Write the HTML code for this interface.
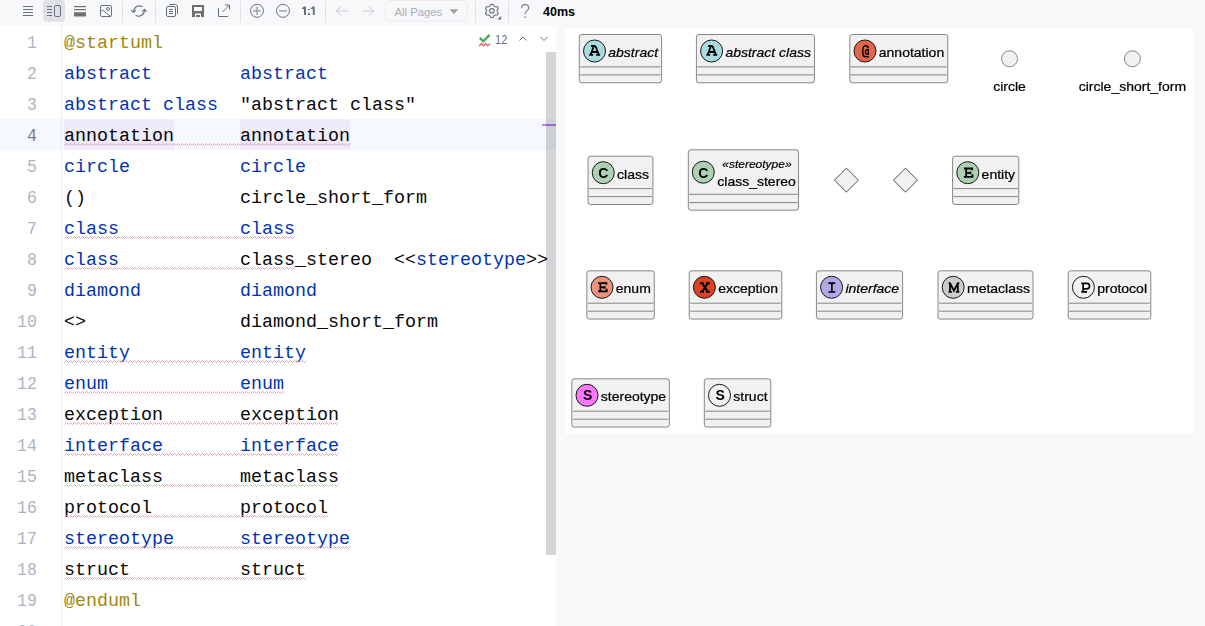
<!DOCTYPE html>
<html><head><meta charset="utf-8">
<style>
html,body{margin:0;padding:0;}
body{width:1205px;height:626px;overflow:hidden;background:#f7f8fa;position:relative;font-family:"Liberation Sans",sans-serif;}
.abs{position:absolute;}
#editor{position:absolute;left:0;top:26px;width:556px;height:600px;background:#fff;overflow:hidden;}
.ln{position:absolute;left:0;width:37px;text-align:right;transform:scaleX(0.9);transform-origin:36px 0;font-family:"Liberation Mono",monospace;font-size:18.33px;line-height:31px;height:31px;color:#aeb3c2;white-space:pre;}
.cl{position:absolute;left:64px;font-family:"Liberation Mono",monospace;font-size:18.33px;line-height:31px;height:31px;color:#080808;white-space:pre;}
.k{color:#0033b3;}
.m{color:#9e880d;}
.hl{}
</style></head><body>
<svg class="abs" style="left:0;top:0" width="600" height="26" viewBox="0 0 600 26">
<g stroke="#6c707e" stroke-width="1" fill="none">
<path d="M23 6.5H33M23 9.5H33M23 12.5H33M23 15.5H33"/>
</g>
<rect x="43" y="0" width="22" height="22" rx="4" fill="#dfe1e5"/>
<g stroke="#6c707e" stroke-width="1" fill="none">
<path d="M47 6.5H52M47 9.5H52M47 12.5H52M47 15.5H52"/>
<rect x="54.5" y="5.5" width="6" height="11" rx="1.5"/>
</g>
<g fill="#6e6e6e">
<rect x="74" y="6" width="12" height="1.2"/>
<rect x="74" y="9" width="12" height="1.2"/>
<rect x="74" y="12.3" width="12" height="4.2"/>
</g>
<g stroke="#6c707e" stroke-width="1" fill="none">
<rect x="100.5" y="5.5" width="11" height="11" rx="1.5"/>
<circle cx="108" cy="9" r="1.5"/>
<path d="M100.7 11.6L102.7 10.1L110.6 16.4" stroke-linejoin="round"/>
</g>
<g stroke="#dfe1e5" stroke-width="1">
<path d="M122.5 1V22.5M155.5 1V22.5M240.5 1V22.5M325.5 1V22.5M475.5 1V22.5M508.5 1V22.5"/>
</g>
<g stroke="#6c707e" stroke-width="1.1" fill="none" stroke-linecap="round" stroke-linejoin="round">
<path d="M133.5 12A6 6 0 0 1 142.3 6.6"/>
<path d="M131.5 10.3L133.5 12.5L135.5 10.3"/>
<path d="M136 15.6A6 6 0 0 0 144.5 9.5"/>
<path d="M142.5 11.5L144.5 9.3L146.5 11.5"/>
</g>
<g stroke="#6c707e" stroke-width="1" fill="none">
<rect x="166.5" y="6.5" width="9" height="10" rx="1.5"/>
<path d="M169.3 4.5H175A2.5 2.5 0 0 1 177.5 7V14"/>
<path d="M169 9.5H173M169 11.5H173M169 13.5H173"/>
</g>
<path fill="#6e6e6e" fill-rule="evenodd" d="M192 5H204V17H192ZM194 7V11H202V7ZM195 13.5V17H196V15H200V17H201V13.5Z"/>
<g stroke="#6c707e" stroke-width="1" fill="none">
<path d="M218.5 8V16.5H228"/>
<path d="M222.5 12L229.5 5M225 5H229.5V9.5"/>
</g>
<g stroke="#6c707e" stroke-width="1" fill="none">
<circle cx="257" cy="10.8" r="6.5"/>
<circle cx="283" cy="10.8" r="6.5"/>
</g>
<g stroke="#8c91a0" stroke-width="1.3" fill="none">
<path d="M253 10.8H261M257 6.8V14.8M279 10.8H287"/>
</g>
<path fill="#6c707e" d="M304 6.6H306V14.9H304ZM302 7.9L304 6.6V9L302 9ZM308 8.9H310V10H308ZM308 13.2H310V14.9H308ZM312.8 6.6H314.7V14.9H312.8ZM311 7.9L312.8 6.6V9L311 9Z"/>
<g stroke="#c9ccd6" stroke-width="1" fill="none">
<path d="M336.5 11H348M341 6.5L336.5 11L341 15.5"/>
<path d="M362 11H373.5M369 6.5L373.5 11L369 15.5"/>
</g>
<rect x="385.5" y="0.5" width="82" height="20.5" rx="4" fill="none" stroke="#ebecf0"/>
<text x="394.5" y="16.2" font-family="Liberation Sans" font-size="11.3" fill="#a8adbd">All Pages</text>
<path d="M449.5 9.3H458.3L453.9 13.9Z" fill="#a0a0a0"/>
<path d="M497.15 10.85L497.17 11.12L497.22 11.39L497.31 11.67L497.45 11.98L497.78 12.36L498.08 12.78L498.14 13.15L498.13 13.52L498.04 13.86L497.89 14.17L497.68 14.46L497.41 14.70L497.10 14.90L496.73 15.03L496.20 14.99L495.70 14.90L495.35 14.94L495.05 15.01L494.77 15.11L494.53 15.22L494.30 15.37L494.08 15.55L493.86 15.77L493.65 16.04L493.47 16.50L493.25 16.96L492.95 17.20L492.61 17.37L492.26 17.47L491.90 17.50L491.54 17.47L491.19 17.37L490.85 17.20L490.55 16.96L490.33 16.50L490.15 16.04L489.94 15.77L489.72 15.55L489.50 15.37L489.27 15.22L489.03 15.11L488.75 15.01L488.45 14.94L488.10 14.90L487.60 14.99L487.07 15.03L486.70 14.90L486.39 14.70L486.12 14.46L485.91 14.17L485.76 13.86L485.67 13.52L485.66 13.15L485.72 12.78L486.02 12.36L486.35 11.98L486.49 11.67L486.58 11.39L486.63 11.12L486.65 10.85L486.63 10.58L486.58 10.31L486.49 10.03L486.35 9.72L486.02 9.34L485.72 8.92L485.66 8.55L485.67 8.18L485.76 7.84L485.91 7.52L486.12 7.24L486.39 7.00L486.70 6.80L487.07 6.67L487.60 6.71L488.10 6.80L488.45 6.76L488.75 6.69L489.03 6.59L489.27 6.48L489.50 6.33L489.72 6.15L489.94 5.93L490.15 5.66L490.33 5.20L490.55 4.74L490.85 4.50L491.19 4.33L491.54 4.23L491.90 4.20L492.26 4.23L492.61 4.33L492.95 4.50L493.25 4.74L493.47 5.20L493.65 5.66L493.86 5.93L494.08 6.15L494.30 6.33L494.53 6.48L494.77 6.59L495.05 6.69L495.35 6.76L495.70 6.80L496.20 6.71L496.73 6.67L497.10 6.80L497.41 7.00L497.68 7.24L497.89 7.52L498.04 7.84L498.13 8.18L498.14 8.55L498.08 8.92L497.78 9.34L497.45 9.72L497.31 10.03L497.22 10.31L497.17 10.58L497.15 10.85Z" stroke="#6c707e" stroke-width="1.15" fill="none" stroke-linejoin="round"/>
<circle cx="491.9" cy="10.85" r="2.3" stroke="#6c707e" stroke-width="1.15" fill="none"/>
<path d="M501.2 16.1V19.6H497.2Z" fill="#6c707e"/>
<path d="M521.6 8.2C521.6 5.8 523.2 4.6 525.2 4.6C527.3 4.6 528.7 5.9 528.7 7.8C528.7 9.7 527.4 10.5 526.3 11.4C525.4 12.2 525.2 12.9 525.2 14.3" stroke="#7b7f8e" stroke-width="1.1" fill="none"/><circle cx="525.2" cy="17.1" r="0.85" fill="#7b7f8e"/>
<text x="543" y="16" font-family="Liberation Sans" font-weight="bold" font-size="12.5" fill="#000">40ms</text>
</svg>
<div id="editor">
<div class="abs" style="left:0;top:93px;width:556px;height:31px;background:#f5f8fe"></div>
<div class="abs" style="left:61px;top:0;width:1px;height:600px;background:#ebecf0"></div>
<div class="abs" style="left:64px;top:93px;width:110px;height:31px;background:#edebfc"></div>
<div class="abs" style="left:240px;top:93px;width:110px;height:31px;background:#edebfc"></div>
<div class="ln" style="top:1.6px">1</div>
<div class="ln" style="top:32.6px">2</div>
<div class="ln" style="top:63.6px">3</div>
<div class="ln" style="top:94.6px;color:#767a8a">4</div>
<div class="ln" style="top:125.6px">5</div>
<div class="ln" style="top:156.6px">6</div>
<div class="ln" style="top:187.6px">7</div>
<div class="ln" style="top:218.6px">8</div>
<div class="ln" style="top:249.6px">9</div>
<div class="ln" style="top:280.6px">10</div>
<div class="ln" style="top:311.6px">11</div>
<div class="ln" style="top:342.6px">12</div>
<div class="ln" style="top:373.6px">13</div>
<div class="ln" style="top:404.6px">14</div>
<div class="ln" style="top:435.6px">15</div>
<div class="ln" style="top:466.6px">16</div>
<div class="ln" style="top:497.6px">17</div>
<div class="ln" style="top:528.6px">18</div>
<div class="ln" style="top:559.6px">19</div>
<div class="ln" style="top:590.6px">20</div>
<div class="cl" style="top:1.6px"><span class="m">@startuml</span></div>
<div class="cl" style="top:32.6px"><span class="k">abstract</span>        <span class="k">abstract</span></div>
<div class="cl" style="top:63.6px"><span class="k">abstract class</span>  "abstract class"</div>
<div class="cl" style="top:94.6px"><span class="hl">annotation</span>      <span class="hl">annotation</span></div>
<div class="cl" style="top:125.6px"><span class="k">circle</span>          <span class="k">circle</span></div>
<div class="cl" style="top:156.6px">()              circle_short_form</div>
<div class="cl" style="top:187.6px"><span class="k">class</span>           <span class="k">class</span></div>
<div class="cl" style="top:218.6px"><span class="k">class</span>           class_stereo  &lt;&lt;<span class="k">stereotype</span>&gt;&gt;</div>
<div class="cl" style="top:249.6px"><span class="k">diamond</span>         <span class="k">diamond</span></div>
<div class="cl" style="top:280.6px">&lt;&gt;              diamond_short_form</div>
<div class="cl" style="top:311.6px"><span class="k">entity</span>          <span class="k">entity</span></div>
<div class="cl" style="top:342.6px"><span class="k">enum</span>            <span class="k">enum</span></div>
<div class="cl" style="top:373.6px">exception       exception</div>
<div class="cl" style="top:404.6px"><span class="k">interface</span>       <span class="k">interface</span></div>
<div class="cl" style="top:435.6px">metaclass       metaclass</div>
<div class="cl" style="top:466.6px">protocol        protocol</div>
<div class="cl" style="top:497.6px"><span class="k">stereotype</span>      <span class="k">stereotype</span></div>
<div class="cl" style="top:528.6px">struct          struct</div>
<div class="cl" style="top:559.6px"><span class="m">@enduml</span></div>
<svg class="abs" style="left:0;top:0" width="556" height="600">
<polyline points="64.5,119.5 66.5,117.5 68.5,119.5 70.5,117.5 72.5,119.5 74.5,117.5 76.5,119.5 78.5,117.5 80.5,119.5 82.5,117.5 84.5,119.5 86.5,117.5 88.5,119.5 90.5,117.5 92.5,119.5 94.5,117.5 96.5,119.5 98.5,117.5 100.5,119.5 102.5,117.5 104.5,119.5 106.5,117.5 108.5,119.5 110.5,117.5 112.5,119.5 114.5,117.5 116.5,119.5 118.5,117.5 120.5,119.5 122.5,117.5 124.5,119.5 126.5,117.5 128.5,119.5 130.5,117.5 132.5,119.5 134.5,117.5 136.5,119.5 138.5,117.5 140.5,119.5 142.5,117.5 144.5,119.5 146.5,117.5 148.5,119.5 150.5,117.5 152.5,119.5 154.5,117.5 156.5,119.5 158.5,117.5 160.5,119.5 162.5,117.5 164.5,119.5 166.5,117.5 168.5,119.5 170.5,117.5 172.5,119.5 174.5,117.5 176.5,119.5 178.5,117.5 180.5,119.5 182.5,117.5 184.5,119.5 186.5,117.5 188.5,119.5 190.5,117.5 192.5,119.5 194.5,117.5 196.5,119.5 198.5,117.5 200.5,119.5 202.5,117.5 204.5,119.5 206.5,117.5 208.5,119.5 210.5,117.5 212.5,119.5 214.5,117.5 216.5,119.5 218.5,117.5 220.5,119.5 222.5,117.5 224.5,119.5 226.5,117.5 228.5,119.5 230.5,117.5 232.5,119.5 234.5,117.5 236.5,119.5 238.5,117.5 240.5,119.5 242.5,117.5 244.5,119.5 246.5,117.5 248.5,119.5 250.5,117.5 252.5,119.5 254.5,117.5 256.5,119.5 258.5,117.5 260.5,119.5 262.5,117.5 264.5,119.5 266.5,117.5 268.5,119.5 270.5,117.5 272.5,119.5 274.5,117.5 276.5,119.5 278.5,117.5 280.5,119.5 282.5,117.5 284.5,119.5 286.5,117.5 288.5,119.5 290.5,117.5 292.5,119.5 294.5,117.5 296.5,119.5 298.5,117.5 300.5,119.5 302.5,117.5 304.5,119.5 306.5,117.5 308.5,119.5 310.5,117.5 312.5,119.5 314.5,117.5 316.5,119.5 318.5,117.5 320.5,119.5 322.5,117.5 324.5,119.5 326.5,117.5 328.5,119.5 330.5,117.5 332.5,119.5 334.5,117.5 336.5,119.5 338.5,117.5 340.5,119.5 342.5,117.5 344.5,119.5 346.5,117.5 348.5,119.5 350.5,117.5" fill="none" stroke="#ee9ea8" stroke-width="1"/>
<polyline points="64.5,212.5 66.5,210.5 68.5,212.5 70.5,210.5 72.5,212.5 74.5,210.5 76.5,212.5 78.5,210.5 80.5,212.5 82.5,210.5 84.5,212.5 86.5,210.5 88.5,212.5 90.5,210.5 92.5,212.5 94.5,210.5 96.5,212.5 98.5,210.5 100.5,212.5 102.5,210.5 104.5,212.5 106.5,210.5 108.5,212.5 110.5,210.5 112.5,212.5 114.5,210.5 116.5,212.5 118.5,210.5 120.5,212.5 122.5,210.5 124.5,212.5 126.5,210.5 128.5,212.5 130.5,210.5 132.5,212.5 134.5,210.5 136.5,212.5 138.5,210.5 140.5,212.5 142.5,210.5 144.5,212.5 146.5,210.5 148.5,212.5 150.5,210.5 152.5,212.5 154.5,210.5 156.5,212.5 158.5,210.5 160.5,212.5 162.5,210.5 164.5,212.5 166.5,210.5 168.5,212.5 170.5,210.5 172.5,212.5 174.5,210.5 176.5,212.5 178.5,210.5 180.5,212.5 182.5,210.5 184.5,212.5 186.5,210.5 188.5,212.5 190.5,210.5 192.5,212.5 194.5,210.5 196.5,212.5 198.5,210.5 200.5,212.5 202.5,210.5 204.5,212.5 206.5,210.5 208.5,212.5 210.5,210.5 212.5,212.5 214.5,210.5 216.5,212.5 218.5,210.5 220.5,212.5 222.5,210.5 224.5,212.5 226.5,210.5 228.5,212.5 230.5,210.5 232.5,212.5 234.5,210.5 236.5,212.5 238.5,210.5 240.5,212.5 242.5,210.5 244.5,212.5 246.5,210.5 248.5,212.5 250.5,210.5 252.5,212.5 254.5,210.5 256.5,212.5 258.5,210.5 260.5,212.5 262.5,210.5 264.5,212.5 266.5,210.5 268.5,212.5 270.5,210.5 272.5,212.5 274.5,210.5 276.5,212.5 278.5,210.5 280.5,212.5 282.5,210.5 284.5,212.5 286.5,210.5 288.5,212.5 290.5,210.5 292.5,212.5 294.5,210.5" fill="none" stroke="#ee9ea8" stroke-width="1"/>
<polyline points="64.5,243.5 66.5,241.5 68.5,243.5 70.5,241.5 72.5,243.5 74.5,241.5 76.5,243.5 78.5,241.5 80.5,243.5 82.5,241.5 84.5,243.5 86.5,241.5 88.5,243.5 90.5,241.5 92.5,243.5 94.5,241.5 96.5,243.5 98.5,241.5 100.5,243.5 102.5,241.5 104.5,243.5 106.5,241.5 108.5,243.5 110.5,241.5 112.5,243.5 114.5,241.5 116.5,243.5 118.5,241.5 120.5,243.5 122.5,241.5 124.5,243.5 126.5,241.5 128.5,243.5 130.5,241.5 132.5,243.5 134.5,241.5 136.5,243.5 138.5,241.5 140.5,243.5 142.5,241.5 144.5,243.5 146.5,241.5 148.5,243.5 150.5,241.5 152.5,243.5 154.5,241.5 156.5,243.5 158.5,241.5 160.5,243.5 162.5,241.5 164.5,243.5 166.5,241.5 168.5,243.5 170.5,241.5 172.5,243.5 174.5,241.5 176.5,243.5 178.5,241.5 180.5,243.5 182.5,241.5 184.5,243.5 186.5,241.5 188.5,243.5 190.5,241.5 192.5,243.5 194.5,241.5 196.5,243.5 198.5,241.5 200.5,243.5 202.5,241.5 204.5,243.5 206.5,241.5 208.5,243.5 210.5,241.5 212.5,243.5 214.5,241.5 216.5,243.5 218.5,241.5 220.5,243.5 222.5,241.5 224.5,243.5 226.5,241.5 228.5,243.5 230.5,241.5 232.5,243.5 234.5,241.5 236.5,243.5 238.5,241.5 240.5,243.5 242.5,241.5 244.5,243.5 246.5,241.5 248.5,243.5 250.5,241.5 252.5,243.5 254.5,241.5 256.5,243.5 258.5,241.5 260.5,243.5 262.5,241.5 264.5,243.5 266.5,241.5 268.5,243.5 270.5,241.5 272.5,243.5 274.5,241.5 276.5,243.5 278.5,241.5 280.5,243.5 282.5,241.5 284.5,243.5 286.5,241.5 288.5,243.5 290.5,241.5 292.5,243.5 294.5,241.5" fill="none" stroke="#ee9ea8" stroke-width="1"/>
<polyline points="64.5,336.5 66.5,334.5 68.5,336.5 70.5,334.5 72.5,336.5 74.5,334.5 76.5,336.5 78.5,334.5 80.5,336.5 82.5,334.5 84.5,336.5 86.5,334.5 88.5,336.5 90.5,334.5 92.5,336.5 94.5,334.5 96.5,336.5 98.5,334.5 100.5,336.5 102.5,334.5 104.5,336.5 106.5,334.5 108.5,336.5 110.5,334.5 112.5,336.5 114.5,334.5 116.5,336.5 118.5,334.5 120.5,336.5 122.5,334.5 124.5,336.5 126.5,334.5 128.5,336.5 130.5,334.5 132.5,336.5 134.5,334.5 136.5,336.5 138.5,334.5 140.5,336.5 142.5,334.5 144.5,336.5 146.5,334.5 148.5,336.5 150.5,334.5 152.5,336.5 154.5,334.5 156.5,336.5 158.5,334.5 160.5,336.5 162.5,334.5 164.5,336.5 166.5,334.5 168.5,336.5 170.5,334.5 172.5,336.5 174.5,334.5 176.5,336.5 178.5,334.5 180.5,336.5 182.5,334.5 184.5,336.5 186.5,334.5 188.5,336.5 190.5,334.5 192.5,336.5 194.5,334.5 196.5,336.5 198.5,334.5 200.5,336.5 202.5,334.5 204.5,336.5 206.5,334.5 208.5,336.5 210.5,334.5 212.5,336.5 214.5,334.5 216.5,336.5 218.5,334.5 220.5,336.5 222.5,334.5 224.5,336.5 226.5,334.5 228.5,336.5 230.5,334.5 232.5,336.5 234.5,334.5 236.5,336.5 238.5,334.5 240.5,336.5 242.5,334.5 244.5,336.5 246.5,334.5 248.5,336.5 250.5,334.5 252.5,336.5 254.5,334.5 256.5,336.5 258.5,334.5 260.5,336.5 262.5,334.5 264.5,336.5 266.5,334.5 268.5,336.5 270.5,334.5 272.5,336.5 274.5,334.5 276.5,336.5 278.5,334.5 280.5,336.5 282.5,334.5 284.5,336.5 286.5,334.5 288.5,336.5 290.5,334.5 292.5,336.5 294.5,334.5 296.5,336.5 298.5,334.5 300.5,336.5 302.5,334.5 304.5,336.5 306.5,334.5" fill="none" stroke="#ee9ea8" stroke-width="1"/>
<polyline points="64.5,367.5 66.5,365.5 68.5,367.5 70.5,365.5 72.5,367.5 74.5,365.5 76.5,367.5 78.5,365.5 80.5,367.5 82.5,365.5 84.5,367.5 86.5,365.5 88.5,367.5 90.5,365.5 92.5,367.5 94.5,365.5 96.5,367.5 98.5,365.5 100.5,367.5 102.5,365.5 104.5,367.5 106.5,365.5 108.5,367.5 110.5,365.5 112.5,367.5 114.5,365.5 116.5,367.5 118.5,365.5 120.5,367.5 122.5,365.5 124.5,367.5 126.5,365.5 128.5,367.5 130.5,365.5 132.5,367.5 134.5,365.5 136.5,367.5 138.5,365.5 140.5,367.5 142.5,365.5 144.5,367.5 146.5,365.5 148.5,367.5 150.5,365.5 152.5,367.5 154.5,365.5 156.5,367.5 158.5,365.5 160.5,367.5 162.5,365.5 164.5,367.5 166.5,365.5 168.5,367.5 170.5,365.5 172.5,367.5 174.5,365.5 176.5,367.5 178.5,365.5 180.5,367.5 182.5,365.5 184.5,367.5 186.5,365.5 188.5,367.5 190.5,365.5 192.5,367.5 194.5,365.5 196.5,367.5 198.5,365.5 200.5,367.5 202.5,365.5 204.5,367.5 206.5,365.5 208.5,367.5 210.5,365.5 212.5,367.5 214.5,365.5 216.5,367.5 218.5,365.5 220.5,367.5 222.5,365.5 224.5,367.5 226.5,365.5 228.5,367.5 230.5,365.5 232.5,367.5 234.5,365.5 236.5,367.5 238.5,365.5 240.5,367.5 242.5,365.5 244.5,367.5 246.5,365.5 248.5,367.5 250.5,365.5 252.5,367.5 254.5,365.5 256.5,367.5 258.5,365.5 260.5,367.5 262.5,365.5 264.5,367.5 266.5,365.5 268.5,367.5 270.5,365.5 272.5,367.5 274.5,365.5 276.5,367.5 278.5,365.5 280.5,367.5 282.5,365.5 284.5,367.5" fill="none" stroke="#ee9ea8" stroke-width="1"/>
<polyline points="64.5,398.5 66.5,396.5 68.5,398.5 70.5,396.5 72.5,398.5 74.5,396.5 76.5,398.5 78.5,396.5 80.5,398.5 82.5,396.5 84.5,398.5 86.5,396.5 88.5,398.5 90.5,396.5 92.5,398.5 94.5,396.5 96.5,398.5 98.5,396.5 100.5,398.5 102.5,396.5 104.5,398.5 106.5,396.5 108.5,398.5 110.5,396.5 112.5,398.5 114.5,396.5 116.5,398.5 118.5,396.5 120.5,398.5 122.5,396.5 124.5,398.5 126.5,396.5 128.5,398.5 130.5,396.5 132.5,398.5 134.5,396.5 136.5,398.5 138.5,396.5 140.5,398.5 142.5,396.5 144.5,398.5 146.5,396.5 148.5,398.5 150.5,396.5 152.5,398.5 154.5,396.5 156.5,398.5 158.5,396.5 160.5,398.5 162.5,396.5 164.5,398.5 166.5,396.5 168.5,398.5 170.5,396.5 172.5,398.5 174.5,396.5 176.5,398.5 178.5,396.5 180.5,398.5 182.5,396.5 184.5,398.5 186.5,396.5 188.5,398.5 190.5,396.5 192.5,398.5 194.5,396.5 196.5,398.5 198.5,396.5 200.5,398.5 202.5,396.5 204.5,398.5 206.5,396.5 208.5,398.5 210.5,396.5 212.5,398.5 214.5,396.5 216.5,398.5 218.5,396.5 220.5,398.5 222.5,396.5 224.5,398.5 226.5,396.5 228.5,398.5 230.5,396.5 232.5,398.5 234.5,396.5 236.5,398.5 238.5,396.5 240.5,398.5 242.5,396.5 244.5,398.5 246.5,396.5 248.5,398.5 250.5,396.5 252.5,398.5 254.5,396.5 256.5,398.5 258.5,396.5 260.5,398.5 262.5,396.5 264.5,398.5 266.5,396.5 268.5,398.5 270.5,396.5 272.5,398.5 274.5,396.5 276.5,398.5 278.5,396.5 280.5,398.5 282.5,396.5 284.5,398.5 286.5,396.5 288.5,398.5 290.5,396.5 292.5,398.5 294.5,396.5 296.5,398.5 298.5,396.5 300.5,398.5 302.5,396.5 304.5,398.5 306.5,396.5 308.5,398.5 310.5,396.5 312.5,398.5 314.5,396.5 316.5,398.5 318.5,396.5 320.5,398.5 322.5,396.5 324.5,398.5 326.5,396.5 328.5,398.5 330.5,396.5 332.5,398.5 334.5,396.5 336.5,398.5 338.5,396.5" fill="none" stroke="#ee9ea8" stroke-width="1"/>
<polyline points="64.5,429.5 66.5,427.5 68.5,429.5 70.5,427.5 72.5,429.5 74.5,427.5 76.5,429.5 78.5,427.5 80.5,429.5 82.5,427.5 84.5,429.5 86.5,427.5 88.5,429.5 90.5,427.5 92.5,429.5 94.5,427.5 96.5,429.5 98.5,427.5 100.5,429.5 102.5,427.5 104.5,429.5 106.5,427.5 108.5,429.5 110.5,427.5 112.5,429.5 114.5,427.5 116.5,429.5 118.5,427.5 120.5,429.5 122.5,427.5 124.5,429.5 126.5,427.5 128.5,429.5 130.5,427.5 132.5,429.5 134.5,427.5 136.5,429.5 138.5,427.5 140.5,429.5 142.5,427.5 144.5,429.5 146.5,427.5 148.5,429.5 150.5,427.5 152.5,429.5 154.5,427.5 156.5,429.5 158.5,427.5 160.5,429.5 162.5,427.5 164.5,429.5 166.5,427.5 168.5,429.5 170.5,427.5 172.5,429.5 174.5,427.5 176.5,429.5 178.5,427.5 180.5,429.5 182.5,427.5 184.5,429.5 186.5,427.5 188.5,429.5 190.5,427.5 192.5,429.5 194.5,427.5 196.5,429.5 198.5,427.5 200.5,429.5 202.5,427.5 204.5,429.5 206.5,427.5 208.5,429.5 210.5,427.5 212.5,429.5 214.5,427.5 216.5,429.5 218.5,427.5 220.5,429.5 222.5,427.5 224.5,429.5 226.5,427.5 228.5,429.5 230.5,427.5 232.5,429.5 234.5,427.5 236.5,429.5 238.5,427.5 240.5,429.5 242.5,427.5 244.5,429.5 246.5,427.5 248.5,429.5 250.5,427.5 252.5,429.5 254.5,427.5 256.5,429.5 258.5,427.5 260.5,429.5 262.5,427.5 264.5,429.5 266.5,427.5 268.5,429.5 270.5,427.5 272.5,429.5 274.5,427.5 276.5,429.5 278.5,427.5 280.5,429.5 282.5,427.5 284.5,429.5 286.5,427.5 288.5,429.5 290.5,427.5 292.5,429.5 294.5,427.5 296.5,429.5 298.5,427.5 300.5,429.5 302.5,427.5 304.5,429.5 306.5,427.5 308.5,429.5 310.5,427.5 312.5,429.5 314.5,427.5 316.5,429.5 318.5,427.5 320.5,429.5 322.5,427.5 324.5,429.5 326.5,427.5 328.5,429.5 330.5,427.5 332.5,429.5 334.5,427.5 336.5,429.5 338.5,427.5" fill="none" stroke="#ee9ea8" stroke-width="1"/>
<polyline points="64.5,460.5 66.5,458.5 68.5,460.5 70.5,458.5 72.5,460.5 74.5,458.5 76.5,460.5 78.5,458.5 80.5,460.5 82.5,458.5 84.5,460.5 86.5,458.5 88.5,460.5 90.5,458.5 92.5,460.5 94.5,458.5 96.5,460.5 98.5,458.5 100.5,460.5 102.5,458.5 104.5,460.5 106.5,458.5 108.5,460.5 110.5,458.5 112.5,460.5 114.5,458.5 116.5,460.5 118.5,458.5 120.5,460.5 122.5,458.5 124.5,460.5 126.5,458.5 128.5,460.5 130.5,458.5 132.5,460.5 134.5,458.5 136.5,460.5 138.5,458.5 140.5,460.5 142.5,458.5 144.5,460.5 146.5,458.5 148.5,460.5 150.5,458.5 152.5,460.5 154.5,458.5 156.5,460.5 158.5,458.5 160.5,460.5 162.5,458.5" fill="none" stroke="#a8d09c" stroke-width="1"/>
<polyline points="162.5,458.5 164.5,460.5 166.5,458.5 168.5,460.5 170.5,458.5 172.5,460.5 174.5,458.5 176.5,460.5 178.5,458.5 180.5,460.5 182.5,458.5 184.5,460.5 186.5,458.5 188.5,460.5 190.5,458.5 192.5,460.5 194.5,458.5 196.5,460.5 198.5,458.5 200.5,460.5 202.5,458.5 204.5,460.5 206.5,458.5 208.5,460.5 210.5,458.5 212.5,460.5 214.5,458.5 216.5,460.5 218.5,458.5 220.5,460.5 222.5,458.5 224.5,460.5 226.5,458.5 228.5,460.5 230.5,458.5 232.5,460.5 234.5,458.5 236.5,460.5 238.5,458.5 240.5,460.5" fill="none" stroke="#ee9ea8" stroke-width="1"/>
<polyline points="240.5,460.5 242.5,458.5 244.5,460.5 246.5,458.5 248.5,460.5 250.5,458.5 252.5,460.5 254.5,458.5 256.5,460.5 258.5,458.5 260.5,460.5 262.5,458.5 264.5,460.5 266.5,458.5 268.5,460.5 270.5,458.5 272.5,460.5 274.5,458.5 276.5,460.5 278.5,458.5 280.5,460.5 282.5,458.5 284.5,460.5 286.5,458.5 288.5,460.5 290.5,458.5 292.5,460.5 294.5,458.5 296.5,460.5 298.5,458.5 300.5,460.5 302.5,458.5 304.5,460.5 306.5,458.5 308.5,460.5 310.5,458.5 312.5,460.5 314.5,458.5 316.5,460.5 318.5,458.5 320.5,460.5 322.5,458.5 324.5,460.5 326.5,458.5 328.5,460.5 330.5,458.5 332.5,460.5 334.5,458.5 336.5,460.5 338.5,458.5" fill="none" stroke="#a8d09c" stroke-width="1"/>
<polyline points="64.5,491.5 66.5,489.5 68.5,491.5 70.5,489.5 72.5,491.5 74.5,489.5 76.5,491.5 78.5,489.5 80.5,491.5 82.5,489.5 84.5,491.5 86.5,489.5 88.5,491.5 90.5,489.5 92.5,491.5 94.5,489.5 96.5,491.5 98.5,489.5 100.5,491.5 102.5,489.5 104.5,491.5 106.5,489.5 108.5,491.5 110.5,489.5 112.5,491.5 114.5,489.5 116.5,491.5 118.5,489.5 120.5,491.5 122.5,489.5 124.5,491.5 126.5,489.5 128.5,491.5 130.5,489.5 132.5,491.5 134.5,489.5 136.5,491.5 138.5,489.5 140.5,491.5 142.5,489.5 144.5,491.5 146.5,489.5 148.5,491.5 150.5,489.5 152.5,491.5 154.5,489.5 156.5,491.5 158.5,489.5 160.5,491.5 162.5,489.5 164.5,491.5 166.5,489.5 168.5,491.5 170.5,489.5 172.5,491.5 174.5,489.5 176.5,491.5 178.5,489.5 180.5,491.5 182.5,489.5 184.5,491.5 186.5,489.5 188.5,491.5 190.5,489.5 192.5,491.5 194.5,489.5 196.5,491.5 198.5,489.5 200.5,491.5 202.5,489.5 204.5,491.5 206.5,489.5 208.5,491.5 210.5,489.5 212.5,491.5 214.5,489.5 216.5,491.5 218.5,489.5 220.5,491.5 222.5,489.5 224.5,491.5 226.5,489.5 228.5,491.5 230.5,489.5 232.5,491.5 234.5,489.5 236.5,491.5 238.5,489.5 240.5,491.5 242.5,489.5 244.5,491.5 246.5,489.5 248.5,491.5 250.5,489.5 252.5,491.5 254.5,489.5 256.5,491.5 258.5,489.5 260.5,491.5 262.5,489.5 264.5,491.5 266.5,489.5 268.5,491.5 270.5,489.5 272.5,491.5 274.5,489.5 276.5,491.5 278.5,489.5 280.5,491.5 282.5,489.5 284.5,491.5 286.5,489.5 288.5,491.5 290.5,489.5 292.5,491.5 294.5,489.5 296.5,491.5 298.5,489.5 300.5,491.5 302.5,489.5 304.5,491.5 306.5,489.5 308.5,491.5 310.5,489.5 312.5,491.5 314.5,489.5 316.5,491.5 318.5,489.5 320.5,491.5 322.5,489.5 324.5,491.5 326.5,489.5 328.5,491.5" fill="none" stroke="#ee9ea8" stroke-width="1"/>
<polyline points="64.5,522.5 66.5,520.5 68.5,522.5 70.5,520.5 72.5,522.5 74.5,520.5 76.5,522.5 78.5,520.5 80.5,522.5 82.5,520.5 84.5,522.5 86.5,520.5 88.5,522.5 90.5,520.5 92.5,522.5 94.5,520.5 96.5,522.5 98.5,520.5 100.5,522.5 102.5,520.5 104.5,522.5 106.5,520.5 108.5,522.5 110.5,520.5 112.5,522.5 114.5,520.5 116.5,522.5 118.5,520.5 120.5,522.5 122.5,520.5 124.5,522.5 126.5,520.5 128.5,522.5 130.5,520.5 132.5,522.5 134.5,520.5 136.5,522.5 138.5,520.5 140.5,522.5 142.5,520.5 144.5,522.5 146.5,520.5 148.5,522.5 150.5,520.5 152.5,522.5 154.5,520.5 156.5,522.5 158.5,520.5 160.5,522.5 162.5,520.5 164.5,522.5 166.5,520.5 168.5,522.5 170.5,520.5 172.5,522.5 174.5,520.5 176.5,522.5 178.5,520.5 180.5,522.5 182.5,520.5 184.5,522.5 186.5,520.5 188.5,522.5 190.5,520.5 192.5,522.5 194.5,520.5 196.5,522.5 198.5,520.5 200.5,522.5 202.5,520.5 204.5,522.5 206.5,520.5 208.5,522.5 210.5,520.5 212.5,522.5 214.5,520.5 216.5,522.5 218.5,520.5 220.5,522.5 222.5,520.5 224.5,522.5 226.5,520.5 228.5,522.5 230.5,520.5 232.5,522.5 234.5,520.5 236.5,522.5 238.5,520.5 240.5,522.5 242.5,520.5 244.5,522.5 246.5,520.5 248.5,522.5 250.5,520.5 252.5,522.5 254.5,520.5 256.5,522.5 258.5,520.5 260.5,522.5 262.5,520.5 264.5,522.5 266.5,520.5 268.5,522.5 270.5,520.5 272.5,522.5 274.5,520.5 276.5,522.5 278.5,520.5 280.5,522.5 282.5,520.5 284.5,522.5 286.5,520.5 288.5,522.5 290.5,520.5 292.5,522.5 294.5,520.5 296.5,522.5 298.5,520.5 300.5,522.5 302.5,520.5 304.5,522.5 306.5,520.5 308.5,522.5 310.5,520.5 312.5,522.5 314.5,520.5 316.5,522.5 318.5,520.5 320.5,522.5 322.5,520.5 324.5,522.5 326.5,520.5 328.5,522.5 330.5,520.5 332.5,522.5 334.5,520.5 336.5,522.5 338.5,520.5 340.5,522.5 342.5,520.5 344.5,522.5 346.5,520.5 348.5,522.5 350.5,520.5" fill="none" stroke="#ee9ea8" stroke-width="1"/>
<polyline points="64.5,553.5 66.5,551.5 68.5,553.5 70.5,551.5 72.5,553.5 74.5,551.5 76.5,553.5 78.5,551.5 80.5,553.5 82.5,551.5 84.5,553.5 86.5,551.5 88.5,553.5 90.5,551.5 92.5,553.5 94.5,551.5 96.5,553.5 98.5,551.5 100.5,553.5 102.5,551.5 104.5,553.5 106.5,551.5 108.5,553.5 110.5,551.5 112.5,553.5 114.5,551.5 116.5,553.5 118.5,551.5 120.5,553.5 122.5,551.5 124.5,553.5 126.5,551.5 128.5,553.5 130.5,551.5 132.5,553.5 134.5,551.5 136.5,553.5 138.5,551.5 140.5,553.5 142.5,551.5 144.5,553.5 146.5,551.5 148.5,553.5 150.5,551.5 152.5,553.5 154.5,551.5 156.5,553.5 158.5,551.5 160.5,553.5 162.5,551.5 164.5,553.5 166.5,551.5 168.5,553.5 170.5,551.5 172.5,553.5 174.5,551.5 176.5,553.5 178.5,551.5 180.5,553.5 182.5,551.5 184.5,553.5 186.5,551.5 188.5,553.5 190.5,551.5 192.5,553.5 194.5,551.5 196.5,553.5 198.5,551.5 200.5,553.5 202.5,551.5 204.5,553.5 206.5,551.5 208.5,553.5 210.5,551.5 212.5,553.5 214.5,551.5 216.5,553.5 218.5,551.5 220.5,553.5 222.5,551.5 224.5,553.5 226.5,551.5 228.5,553.5 230.5,551.5 232.5,553.5 234.5,551.5 236.5,553.5 238.5,551.5 240.5,553.5 242.5,551.5 244.5,553.5 246.5,551.5 248.5,553.5 250.5,551.5 252.5,553.5 254.5,551.5 256.5,553.5 258.5,551.5 260.5,553.5 262.5,551.5 264.5,553.5 266.5,551.5 268.5,553.5 270.5,551.5 272.5,553.5 274.5,551.5 276.5,553.5 278.5,551.5 280.5,553.5 282.5,551.5 284.5,553.5 286.5,551.5 288.5,553.5 290.5,551.5 292.5,553.5 294.5,551.5 296.5,553.5 298.5,551.5 300.5,553.5 302.5,551.5 304.5,553.5 306.5,551.5" fill="none" stroke="#ee9ea8" stroke-width="1"/>
</svg>
<div class="abs" style="left:542px;top:98px;width:14px;height:2px;background:#c27ff0"></div>
<div class="abs" style="left:546px;top:26px;width:10px;height:503px;background:rgba(0,0,0,0.165)"></div>
<svg class="abs" style="left:470px;top:0" width="86" height="26">
<path d="M9.8 11.8L13.3 15.3L19.6 8.8" stroke="#55a85f" stroke-width="2.4" fill="none"/>
<path d="M9.2 20L11.5 17.5L13.6 19.8L15.8 17.5L17.9 19.8L20.2 17.3" stroke="#e55765" stroke-width="1.2" fill="none"/>
<text x="25" y="18" font-family="Liberation Sans" font-size="12.3" fill="#6c707e" textLength="12.3" lengthAdjust="spacingAndGlyphs">12</text>
<path d="M49.5 14.5L53 11L56.5 14.5" stroke="#6c707e" stroke-width="1" fill="none"/>
<path d="M70.5 11L74 14.5L77.5 11" stroke="#6c707e" stroke-width="1" fill="none"/>
</svg>
</div>
<svg class="abs" style="left:565px;top:28px;will-change:transform" width="628" height="406" viewBox="565 28 628 406">
<rect x="565" y="28" width="628" height="406" fill="#fff"/>
<rect x="579.30" y="34.50" width="82.30" height="48.3" rx="2.5" fill="#F1F1F1" stroke="#181818" stroke-width="0.5"/>
<circle cx="594.50" cy="51.00" r="11" fill="#A9DCDF" stroke="#181818" stroke-width="1"/>
<path transform="translate(594.50 51.00) scale(1.02 1.06)" d="M-3.4 -4.7H1.0M-0.6 -4.7L-3.8 3.5M0.9 -4.7L4.2 3.5M-2.6 0.9H2.9M-5.2 3.6H-1.4M1.6 3.6H5.5" stroke="#000" stroke-width="1.75" fill="none"/>
<text transform="translate(608.30 56.80) scale(1 0.96)" font-family="Liberation Sans" font-size="14" font-style="italic" fill="#000" stroke="#000" stroke-width="0.25">abstract</text>
<path d="M580.30 66.90H660.60M580.30 74.90H660.60" stroke="#181818" stroke-width="0.5"/>
<rect x="696.40" y="34.50" width="118.10" height="48.3" rx="2.5" fill="#F1F1F1" stroke="#181818" stroke-width="0.5"/>
<circle cx="711.60" cy="51.00" r="11" fill="#A9DCDF" stroke="#181818" stroke-width="1"/>
<path transform="translate(711.60 51.00) scale(1.02 1.06)" d="M-3.4 -4.7H1.0M-0.6 -4.7L-3.8 3.5M0.9 -4.7L4.2 3.5M-2.6 0.9H2.9M-5.2 3.6H-1.4M1.6 3.6H5.5" stroke="#000" stroke-width="1.75" fill="none"/>
<text transform="translate(725.40 56.80) scale(1 0.96)" font-family="Liberation Sans" font-size="14" font-style="italic" fill="#000" stroke="#000" stroke-width="0.25">abstract class</text>
<path d="M697.40 66.90H813.50M697.40 74.90H813.50" stroke="#181818" stroke-width="0.5"/>
<rect x="849.80" y="34.50" width="98.00" height="48.3" rx="2.5" fill="#F1F1F1" stroke="#181818" stroke-width="0.5"/>
<circle cx="865.00" cy="51.00" r="11" fill="#E3664A" stroke="#181818" stroke-width="1"/>
<path transform="translate(865.00 51.00) scale(1.02 1.06)" d="M3.2 -2.8C3.2 -4.4 2.2 -5.0 0.6 -5.0C-1.0 -5.0 -2.1 -3.8 -2.1 -1.2V2.4C-2.1 4.8 -0.9 5.4 0.8 5.4H3.8M3.2 -2.2V3.6M3.2 -1.4C1.5 -1.8 0.4 -0.8 0.4 1.0C0.4 2.8 1.5 3.4 3.2 3.0" stroke="#000" stroke-width="1.3499999999999999" fill="none"/>
<text transform="translate(878.80 56.80) scale(1 0.96)" font-family="Liberation Sans" font-size="14" fill="#000" stroke="#000" stroke-width="0.25">annotation</text>
<path d="M850.80 66.90H946.80M850.80 74.90H946.80" stroke="#181818" stroke-width="0.5"/>
<rect x="588.05" y="156.20" width="64.90" height="48.3" rx="2.5" fill="#F1F1F1" stroke="#181818" stroke-width="0.5"/>
<circle cx="603.25" cy="172.70" r="11" fill="#ADD1B2" stroke="#181818" stroke-width="1"/>
<text x="603.35" y="178.20" text-anchor="middle" font-family="Liberation Sans" font-weight="bold" font-size="14" fill="#000">C</text>
<text transform="translate(617.05 178.50) scale(1 0.96)" font-family="Liberation Sans" font-size="14" fill="#000" stroke="#000" stroke-width="0.25">class</text>
<path d="M589.05 188.60H651.95M589.05 196.60H651.95" stroke="#181818" stroke-width="0.5"/>
<rect x="952.60" y="156.20" width="66.20" height="48.3" rx="2.5" fill="#F1F1F1" stroke="#181818" stroke-width="0.5"/>
<circle cx="967.80" cy="172.70" r="11" fill="#ADD1B2" stroke="#181818" stroke-width="1"/>
<path transform="translate(967.80 172.70) scale(1.02 1.06)" d="M-1.6 -4.0V3.9M-3.8 -4.0H4.6M4.3 -4.8V-2.3M-1.6 0.1H2.6M2.6 -1.2V1.4M-3.8 3.9H5.0M4.6 1.4V4.7" stroke="#000" stroke-width="1.75" fill="none"/>
<text transform="translate(981.60 178.50) scale(1 0.96)" font-family="Liberation Sans" font-size="14" fill="#000" stroke="#000" stroke-width="0.25">entity</text>
<path d="M953.60 188.60H1017.80M953.60 196.60H1017.80" stroke="#181818" stroke-width="0.5"/>
<rect x="586.80" y="270.80" width="67.50" height="48.3" rx="2.5" fill="#F1F1F1" stroke="#181818" stroke-width="0.5"/>
<circle cx="602.00" cy="287.30" r="11" fill="#EB937F" stroke="#181818" stroke-width="1"/>
<path transform="translate(602.00 287.30) scale(1.02 1.06)" d="M-1.6 -4.0V3.9M-3.8 -4.0H4.6M4.3 -4.8V-2.3M-1.6 0.1H2.6M2.6 -1.2V1.4M-3.8 3.9H5.0M4.6 1.4V4.7" stroke="#000" stroke-width="1.75" fill="none"/>
<text transform="translate(615.80 293.10) scale(1 0.96)" font-family="Liberation Sans" font-size="14" fill="#000" stroke="#000" stroke-width="0.25">enum</text>
<path d="M587.80 303.20H653.30M587.80 311.20H653.30" stroke="#181818" stroke-width="0.5"/>
<rect x="689.20" y="270.80" width="92.60" height="48.3" rx="2.5" fill="#F1F1F1" stroke="#181818" stroke-width="0.5"/>
<circle cx="704.40" cy="287.30" r="11" fill="#D94321" stroke="#181818" stroke-width="1"/>
<path transform="translate(704.40 287.30) scale(1.02 1.06)" d="M-2.2 -3.9L3.3 4.2M3.3 -3.9L-2.2 4.2M-4.3 -3.9H-0.6M1.6 -3.9H5.3M-4.3 4.2H-0.6M1.6 4.2H5.3" stroke="#000" stroke-width="1.8499999999999999" fill="none"/>
<text transform="translate(718.20 293.10) scale(1 0.96)" font-family="Liberation Sans" font-size="14" fill="#000" stroke="#000" stroke-width="0.25">exception</text>
<path d="M690.20 303.20H780.80M690.20 311.20H780.80" stroke="#181818" stroke-width="0.5"/>
<rect x="816.40" y="270.80" width="86.20" height="48.3" rx="2.5" fill="#F1F1F1" stroke="#181818" stroke-width="0.5"/>
<circle cx="831.60" cy="287.30" r="11" fill="#B4A7E5" stroke="#181818" stroke-width="1"/>
<path transform="translate(831.60 287.30) scale(1.02 1.06)" d="M-3.2 -4.0H3.6M-3.2 4.4H3.6M0.3 -4.0V4.4" stroke="#000" stroke-width="1.5499999999999998" fill="none"/>
<text transform="translate(845.40 293.10) scale(1 0.96)" font-family="Liberation Sans" font-size="14" font-style="italic" fill="#000" stroke="#000" stroke-width="0.25">interface</text>
<path d="M817.40 303.20H901.60M817.40 311.20H901.60" stroke="#181818" stroke-width="0.5"/>
<rect x="938.00" y="270.80" width="95.00" height="48.3" rx="2.5" fill="#F1F1F1" stroke="#181818" stroke-width="0.5"/>
<circle cx="953.20" cy="287.30" r="11" fill="#CCCCCC" stroke="#181818" stroke-width="1"/>
<path transform="translate(953.20 287.30) scale(1.02 1.06)" d="M-3.1 -3.9V4.3M4.5 -3.9V4.3M-3.1 -3.9L0.7 3.2L4.5 -3.9M-4.6 -3.9H-2.6M4 -3.9H6M-4.6 4.3H-1.3M2.7 4.3H6" stroke="#000" stroke-width="1.75" fill="none"/>
<text transform="translate(967.00 293.10) scale(1 0.96)" font-family="Liberation Sans" font-size="14" fill="#000" stroke="#000" stroke-width="0.25">metaclass</text>
<path d="M939.00 303.20H1032.00M939.00 311.20H1032.00" stroke="#181818" stroke-width="0.5"/>
<rect x="1068.20" y="270.80" width="82.60" height="48.3" rx="2.5" fill="#F1F1F1" stroke="#181818" stroke-width="0.5"/>
<circle cx="1083.40" cy="287.30" r="11" fill="#F1F1F1" stroke="#181818" stroke-width="1"/>
<path transform="translate(1083.40 287.30) scale(1.02 1.06)" d="M-0.3 -3.7V4.1M-2.1 -3.7H3.5C5.6 -3.7 6.0 -2.5 6.0 -1.2C6.0 0.3 5.2 1.4 3.3 1.4H-0.3M-2.1 4.4H3.6" stroke="#000" stroke-width="1.65" fill="none"/>
<text transform="translate(1097.20 293.10) scale(1 0.96)" font-family="Liberation Sans" font-size="14" fill="#000" stroke="#000" stroke-width="0.25">protocol</text>
<path d="M1069.20 303.20H1149.80M1069.20 311.20H1149.80" stroke="#181818" stroke-width="0.5"/>
<rect x="571.80" y="378.80" width="97.60" height="48.3" rx="2.5" fill="#F1F1F1" stroke="#181818" stroke-width="0.5"/>
<circle cx="587.00" cy="395.30" r="11" fill="#FF77FF" stroke="#181818" stroke-width="1"/>
<text x="587.75" y="400.20" text-anchor="middle" font-family="Liberation Sans" font-weight="bold" font-size="14" fill="#000">S</text>
<text transform="translate(600.80 401.10) scale(1 0.96)" font-family="Liberation Sans" font-size="14" fill="#000" stroke="#000" stroke-width="0.25">stereotype</text>
<path d="M572.80 411.20H668.40M572.80 419.20H668.40" stroke="#181818" stroke-width="0.5"/>
<rect x="704.30" y="378.80" width="66.50" height="48.3" rx="2.5" fill="#F1F1F1" stroke="#181818" stroke-width="0.5"/>
<circle cx="719.50" cy="395.30" r="11" fill="#F1F1F1" stroke="#181818" stroke-width="1"/>
<text x="720.25" y="400.20" text-anchor="middle" font-family="Liberation Sans" font-weight="bold" font-size="14" fill="#000">S</text>
<text transform="translate(733.30 401.10) scale(1 0.96)" font-family="Liberation Sans" font-size="14" fill="#000" stroke="#000" stroke-width="0.25">struct</text>
<path d="M705.30 411.20H769.80M705.30 419.20H769.80" stroke="#181818" stroke-width="0.5"/>
<rect x="688.3" y="149.8" width="110.2" height="60.4" rx="2.5" fill="#F1F1F1" stroke="#181818" stroke-width="0.5"/>
<circle cx="703.30" cy="172.20" r="11" fill="#ADD1B2" stroke="#181818" stroke-width="1"/>
<text x="703.40" y="177.70" text-anchor="middle" font-family="Liberation Sans" font-weight="bold" font-size="14" fill="#000">C</text>
<text transform="translate(722.30 167.70) scale(1 0.96)" font-family="Liberation Sans" font-size="12" font-style="italic" fill="#000" stroke="#000" stroke-width="0.2">«stereotype»</text>
<text transform="translate(717.30 186.00) scale(1 0.96)" font-family="Liberation Sans" font-size="14" fill="#000" stroke="#000" stroke-width="0.25">class_stereo</text>
<path d="M689.30 194.30H797.50M689.30 202.60H797.50" stroke="#181818" stroke-width="0.5"/>
<circle cx="1009.5" cy="58.8" r="8" fill="#F1F1F1" stroke="#181818" stroke-width="0.5"/>
<text transform="translate(1009.5 90.5) scale(1 0.96)" text-anchor="middle" font-family="Liberation Sans" font-size="14" fill="#000" stroke="#000" stroke-width="0.25">circle</text>
<circle cx="1132.4" cy="58.8" r="8" fill="#F1F1F1" stroke="#181818" stroke-width="0.5"/>
<text transform="translate(1132.4 90.5) scale(1 0.96)" text-anchor="middle" font-family="Liberation Sans" font-size="14" fill="#000" stroke="#000" stroke-width="0.25">circle_short_form</text>
<path d="M846.4 168.2L858.4 180.2L846.4 192.2L834.4 180.2Z" fill="#F1F1F1" stroke="#181818" stroke-width="0.75"/>
<path d="M905.5 168.2L917.5 180.2L905.5 192.2L893.5 180.2Z" fill="#F1F1F1" stroke="#181818" stroke-width="0.75"/>
</svg>
</body></html>
